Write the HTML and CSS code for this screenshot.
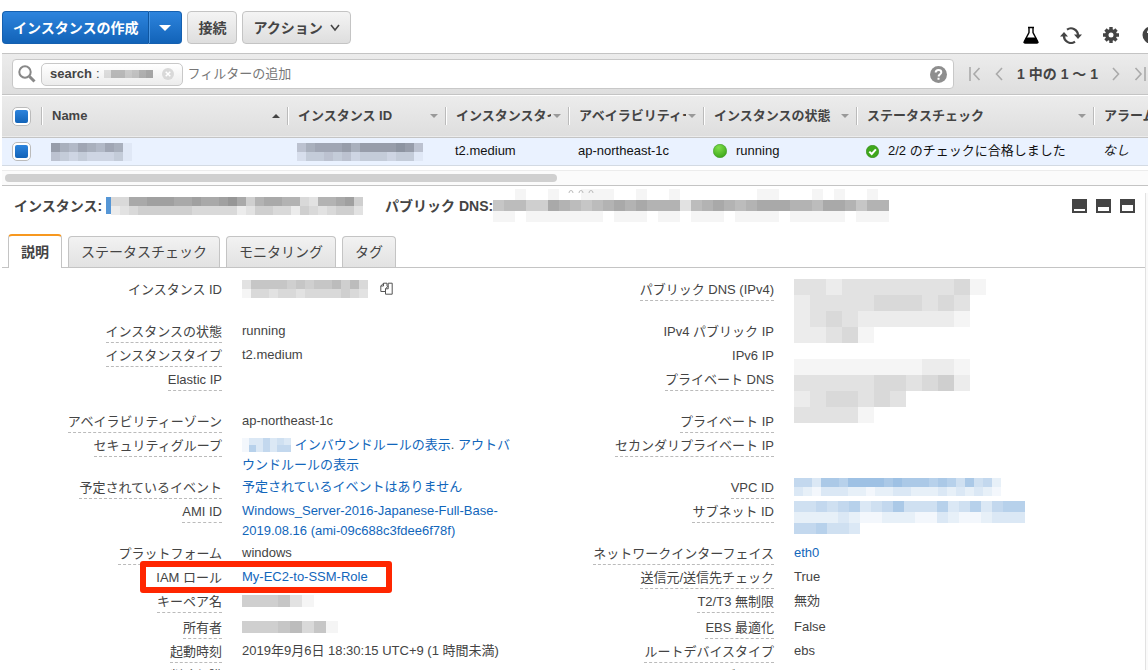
FILE: index.html
```html
<!DOCTYPE html>
<html lang="ja">
<head>
<meta charset="utf-8">
<meta name="viewport" content="width=device-width, initial-scale=1">
<title>インスタンス</title>
<link rel="stylesheet" href="styles.css">
<script src="mosaic.js" defer></script>
</head>
<body>
<header class="toolbar">
  <div class="split">
    <button type="button" class="btn btn-primary split-main">インスタンスの作成</button><button type="button" class="btn btn-primary split-toggle" aria-label="その他の作成オプション"><svg width="12" height="6" viewBox="0 0 12 6"><path d="M0 0h12L6 6z" fill="#fff"/></svg></button>
  </div>
  <button type="button" class="btn">接続</button>
  <button type="button" class="btn">アクション<svg class="chev" width="10" height="8" viewBox="0 0 10 8"><path d="M1 1l4 5 4-5" fill="none" stroke="#444" stroke-width="1.6"/></svg></button>
  <div class="tools">
    <button type="button" class="tool" aria-label="試験機能"><svg width="22" height="18" viewBox="0 0 22 18"><path d="M8 1.500h6M9 1.500v5L4.300 15.500q-.6 1.500 .9 1.500h11.600q1.500 0 .9-1.500L13 6.500v-5" fill="none" stroke="#000" stroke-width="1.400"/><path d="M6 11.500h10l2.500 5.500h-15z" fill="#000"/></svg></button>
    <button type="button" class="tool" aria-label="更新"><svg width="22" height="18" viewBox="0 0 22 18"><path d="M7 3.600A7 7 0 0 1 18 9.500M15 15.600A7 7 0 0 1 4 9" fill="none" stroke="#444" stroke-width="2.200"/><path d="M14 8.500h8l-4 4.500zM0 10.500h8L4 6z" fill="#444"/></svg></button>
    <button type="button" class="tool" aria-label="設定"><svg width="22" height="18" viewBox="0 0 22 18"><g transform="translate(11 9)" fill="none" stroke="#444"><circle r="4.200" stroke-width="3.400"/><path stroke-width="3.400" d="M0-8v3M0 8v-3M-8 0h3M8 0h-3M-5.500-5.500l2 2M5.500 5.500l-2-2M5.500-5.500l-2 2M-5.500 5.500l2-2"/></g></svg></button>
    <button type="button" class="tool" aria-label="ヘルプ"><svg width="22" height="18" viewBox="0 0 22 18"><circle cx="11" cy="9" r="8.500" fill="#444"/><path d="M8 7q0-3 3-3t3 2.700q0 1.300-1.500 2.200T11 11.500M11 12.500v2" fill="none" stroke="#fff" stroke-width="2"/></svg></button>
  </div>
</header>

<div class="filterbar">
  <div class="searchbox">
    <svg width="18" height="18" viewBox="0 0 18 18"><circle cx="7" cy="7" r="5.700" fill="none" stroke="#888" stroke-width="2"/><path d="M11.500 11.500l5 5" stroke="#888" stroke-width="3"/></svg>
    <span class="chip"><b>search</b> : <span class="mosaic" data-w="7" data-h="8" data-rows="3775689"></span><button type="button" class="chip-x" aria-label="削除"><svg width="12" height="12" viewBox="0 0 12 12"><circle cx="6" cy="6" r="6" fill="#d9d9d9"/><path d="M3.700 3.700l4.600 4.600M8.300 3.700L3.700 8.300" stroke="#fff" stroke-width="1.500"/></svg></button></span>
    <input type="text" class="search-input" placeholder="フィルターの追加" aria-label="フィルターの追加">
    <button type="button" class="plain" aria-label="検索のヘルプ"><svg width="17" height="17" viewBox="0 0 17 17"><circle cx="8.500" cy="8.500" r="8.500" fill="#8e8e8e"/><path d="M5.700 6.600q0-2.600 2.800-2.600t2.800 2.300q0 1.200-1.300 2T8.500 10.500M8.500 11.700v2" fill="none" stroke="#fff" stroke-width="2"/></svg></button>
  </div>
  <nav class="pager" aria-label="ページ">
    <button type="button" class="plain" aria-label="最初"><svg width="12" height="14" viewBox="0 0 12 14"><path d="M1 0v14M10.500 1L5 7l5.500 6" fill="none" stroke="#aaa" stroke-width="1.600"/></svg></button>
    <button type="button" class="plain" aria-label="前"><svg width="8" height="14" viewBox="0 0 8 14"><path d="M7 1L1.500 7 7 13" fill="none" stroke="#aaa" stroke-width="1.600"/></svg></button>
    <span>1 中の 1 〜 1</span>
    <button type="button" class="plain" aria-label="次"><svg width="8" height="14" viewBox="0 0 8 14"><path d="M1 1l5.500 6L1 13" fill="none" stroke="#aaa" stroke-width="1.600"/></svg></button>
    <button type="button" class="plain" aria-label="最後"><svg width="12" height="14" viewBox="0 0 12 14"><path d="M11 0v14M1.500 1L7 7l-5.500 6" fill="none" stroke="#aaa" stroke-width="1.600"/></svg></button>
  </nav>
</div>

<div class="table-wrap">
<table class="instances">
  <colgroup><col class="c-check"><col class="c-name"><col class="c-id"><col class="c-type"><col class="c-zone"><col class="c-state"><col class="c-status"><col class="c-alarm"></colgroup>
  <thead><tr>
    <th class="check"><input type="checkbox" class="box" checked aria-label="すべて選択"></th>
    <th><div class="head"><span>Name</span><i class="up"></i></div></th>
    <th><div class="head"><span>インスタンス ID</span><i class="down"></i></div></th>
    <th><div class="head"><span>インスタンスタイプ</span><i class="down"></i></div></th>
    <th><div class="head"><span>アベイラビリティーゾーン</span><i class="down"></i></div></th>
    <th><div class="head"><span>インスタンスの状態</span><i class="down"></i></div></th>
    <th><div class="head"><span>ステータスチェック</span><i class="down"></i></div></th>
    <th><div class="head"><span>アラームのステータス</span></div></th>
  </tr></thead>
  <tbody><tr>
    <td class="check"><input type="checkbox" class="box" checked aria-label="インスタンスを選択"></td>
    <td><span class="mosaic slate" data-w="9" data-h="9" data-rows="976876871,543433341"></span></td>
    <td><span class="mosaic slate" data-w="9" data-h="9" data-rows="57888979999a95,24454534443441"></span></td>
    <td>t2.medium</td>
    <td>ap-northeast-1c</td>
    <td><span class="status"><svg width="14" height="14" viewBox="0 0 14 14"><defs><radialGradient id="ball" cx=".4" cy=".25" r=".8"><stop offset="0" stop-color="#7fdf4a"/><stop offset="1" stop-color="#3aa51a"/></radialGradient></defs><circle cx="7" cy="7" r="6.700" fill="url(#ball)" stroke="#3c9a20" stroke-width=".6"/></svg>running</span></td>
    <td><span class="status"><svg width="13" height="13" viewBox="0 0 13 13"><circle cx="6.500" cy="6.500" r="6.200" fill="#3fa81c" stroke="#2f8412" stroke-width=".6"/><path d="M3.300 6.600l2.400 2.400 4.200-4.600" fill="none" stroke="#fff" stroke-width="2"/></svg>2/2 のチェックに合格しました</span></td>
    <td><em>なし</em></td>
  </tr></tbody>
</table>
<div class="scroll"><div class="thumb"></div></div>
</div>

<section class="details">
  <svg class="grip" width="26" height="3" viewBox="0 0 26 3"><g fill="none" stroke="#bbb"><path d="M1 3q0-2.500 2-2.500T5 3M11 3q0-2.500 2-2.500T15 3M21 3q0-2.500 2-2.500T25 3"/></g></svg>
  <div class="pane">
    <div class="title">
      <span class="title-part">インスタンス:<i class="bar"></i><span class="mosaic" data-w="9" data-h="9" data-rows="4499aaa99a99ab958998843889a5,2345555554444423554425434553"></span></span>
      <span class="title-part">パブリック DNS:<span class="mosaic" data-w="11" data-h="11" data-rows="001001001110010010000000110001010010,677559876789898883789878999887998688,110111111101110110111011110111110111"></span></span>
      <span class="layouts">
        <button type="button" class="plain" aria-label="下部に最小化"><svg width="15" height="14"><path d="M0 0h15v14H0z" fill="#444"/><path d="M2 10h11v2H2z" fill="#fff"/></svg></button>
        <button type="button" class="plain" aria-label="半分表示"><svg width="15" height="14"><path d="M0 0h15v14H0z" fill="#444"/><path d="M2 8h11v4H2z" fill="#fff"/></svg></button>
        <button type="button" class="plain" aria-label="全体表示"><svg width="15" height="14"><path d="M0 0h15v14H0z" fill="#444"/><path d="M2 6h11v6H2z" fill="#fff"/></svg></button>
      </span>
    </div>
    <div class="tabs" role="tablist">
      <button type="button" role="tab" class="tab active" aria-selected="true">説明</button>
      <button type="button" role="tab" class="tab">ステータスチェック</button>
      <button type="button" role="tab" class="tab">モニタリング</button>
      <button type="button" role="tab" class="tab">タグ</button>
    </div>
    <div class="props">
      <div class="label tall"><span class="bare">インスタンス ID</span></div>
      <div class="value copy"><span class="mosaic" data-w="9" data-h="9" data-rows="36666565667574,14434434444543"></span><button type="button" class="plain" aria-label="コピー"><svg width="13" height="13" viewBox="0 0 13 13"><path d="M5 9.500H.8V4L3.500 1.200H7v3M3.500 1.200V4H.8M5.500 12.200V6.800L8.200 4V1.200h4v11zM8.200 4v2.800H5.500" fill="none" stroke="#555"/></svg></button></div>
      <div class="label"><span>パブリック DNS (IPv4)</span></div>
      <div class="value masked"><span class="mosaic" data-w="16" data-h="16" data-rows="332333333341,23333444343,23432222221,22341,0,11111111221,33333443452,2344343,33331"></span></div>

      <div class="label"><span>インスタンスの状態</span></div><div class="value">running</div>
      <div class="label"><span class="bare">IPv4 パブリック IP</span></div>

      <div class="label"><span>インスタンスタイプ</span></div><div class="value">t2.medium</div>
      <div class="label"><span class="bare">IPv6 IP</span></div>

      <div class="label tall"><span>Elastic IP</span></div><div class="value"></div>
      <div class="label"><span>プライベート DNS</span></div>

      <div class="label"><span>アベイラビリティーゾーン</span></div><div class="value">ap-northeast-1c</div>
      <div class="label"><span>プライベート IP</span></div>

      <div class="label tall"><span>セキュリティグループ</span></div>
      <div class="value"><span class="mosaic blue" data-w="7" data-h="7" data-rows="1335343,1635355"></span> <a href="#">インバウンドルールの表示</a>. <a href="#">アウトバウンドルールの表示</a></div>
      <div class="label"><span>セカンダリプライベート IP</span></div><div class="value"></div>

      <div class="label"><span>予定されているイベント</span></div><div class="value"><a href="#">予定されているイベントはありません</a></div>
      <div class="label"><span>VPC ID</span></div>
      <div class="value"><span class="mosaic blue" data-w="9" data-h="9" data-rows="55377688887877767647452,32133322122332223232321"></span></div>

      <div class="label tall"><span>AMI ID</span></div><div class="value"><a href="#">Windows_Server-2016-Japanese-Full-Base-2019.08.16 (ami-09c688c3fdee6f78f)</a></div>
      <div class="label"><span>サブネット ID</span></div>
      <div class="value"><span class="mosaic blue" data-w="11" data-h="11" data-rows="445456345744463463566,222232112221132112333,556443"></span></div>

      <div class="label"><span>プラットフォーム</span></div><div class="value">windows</div>
      <div class="label"><span>ネットワークインターフェイス</span></div><div class="value"><a href="#">eth0</a></div>

      <div class="label marked"><span class="bare">IAM ロール</span></div><div class="value"><a href="#">My-EC2-to-SSM-Role</a></div>
      <div class="label"><span>送信元/送信先チェック</span></div><div class="value">True</div>

      <div class="label mid"><span>キーペア名</span></div><div class="value"><span class="mosaic" data-w="12" data-h="12" data-rows="555631"></span></div>
      <div class="label"><span>T2/T3 無制限</span></div><div class="value">無効</div>

      <div class="label"><span>所有者</span></div><div class="value"><span class="mosaic" data-w="12" data-h="12" data-rows="55567461"></span></div>
      <div class="label"><span>EBS 最適化</span></div><div class="value">False</div>

      <div class="label"><span>起動時刻</span></div><div class="value">2019年9月6日 18:30:15 UTC+9 (1 時間未満)</div>
      <div class="label"><span>ルートデバイスタイプ</span></div><div class="value">ebs</div>

      <div class="label"><span>削除保護</span></div><div class="value">False</div>
      <div class="label"><span>ルートデバイス</span></div><div class="value"><a href="#">/dev/sda1</a></div>
    </div>
  </div>
  <div class="edge"></div>
</section>
</body>
</html>
```
FILE: styles.css
```css
*, *::after { box-sizing: border-box; }
html, body { height: 100%; }
body {
  margin: 0;
  padding-left: 2px;
  display: flex;
  flex-direction: column;
  overflow: hidden;
  background: #fff;
  color: #444;
  font: 13px/20px "Liberation Sans", "Noto Sans CJK JP", sans-serif;
}
button, input { font: inherit; color: inherit; }
svg { display: block; }
a { color: #1166bb; text-decoration: none; }
.plain, .tool, .chip-x { border: 0; padding: 0; background: none; flex: none; }

.toolbar { display: flex; gap: 5px; padding: 11px 0 9px; flex: none; }
.btn {
  display: flex;
  align-items: center;
  height: 33px;
  padding: 0 10px;
  border: 1px solid #c4c4c4;
  border-radius: 4px;
  background: linear-gradient(#f4f4f4, #dedede);
  font-size: 14px;
  font-weight: bold;
  white-space: nowrap;
}
.chev { margin-left: 7px; }
.split { display: flex; }
.btn-primary {
  color: #fff;
  border-color: #1560b0;
  background: linear-gradient(#2d84dd, #1263b8);
}
.split-main { border-radius: 4px 0 0 4px; border-right: 0; }
.split-toggle { border-radius: 0 4px 4px 0; border-left-color: #0f56a0; box-shadow: inset 1px 0 #4a97e4; }
.tools { display: flex; gap: 18px; margin: 0 -14px 0 auto; align-items: flex-end; }

.filterbar {
  display: flex;
  align-items: center;
  flex: none;
  padding: 5px 2px 5px 10px;
  border-top: 1px solid #c4c4c4;
  border-bottom: 1px solid #c4c4c4;
  background: linear-gradient(#ececec, #dedede);
}
.searchbox {
  display: flex;
  align-items: center;
  flex: 1;
  height: 30px;
  padding: 0 6px 0 5px;
  border: 1px solid #c8c8c8;
  border-radius: 4px;
  background: #fff;
}
.chip {
  display: flex;
  align-items: center;
  gap: 4px;
  height: 23px;
  margin-left: 5px;
  padding: 0 8px;
  border: 1px solid #c8c8c8;
  border-radius: 5px;
  background: linear-gradient(#fff, #ececec);
}
.chip-x { margin-left: 5px; }
.search-input { flex: 1; min-width: 0; height: 20px; margin-left: 5px; padding: 0; border: 0; outline: 0; background: none; }
.search-input::placeholder { color: #777; opacity: 1; }
.pager { display: flex; align-items: center; gap: 14px; margin-left: 15px; font-weight: bold; font-size: 14px; white-space: nowrap; }

.table-wrap { flex: none; overflow: hidden; border-top: 1px solid #fff; }
.instances { width: 1291px; table-layout: fixed; border-collapse: collapse; }
.c-check { width: 39px; }
.c-name { width: 246px; }
.c-id { width: 158px; }
.c-type { width: 123px; }
.c-zone { width: 135px; }
.c-state { width: 153px; }
.c-status { width: 237px; }
.c-alarm { width: 200px; }
.instances thead tr { height: 41px; background: linear-gradient(#ececec, #dedede); border-bottom: 1px solid #c4c4c4; }
.instances th { padding: 0; text-align: left; }
.head {
  display: flex;
  align-items: center;
  gap: 2px;
  height: 18px;
  padding: 0 7px 0 10px;
  border-left: 1px solid #bbb;
  box-shadow: inset 1px 0 #fff;
}
.head span { flex: 1; overflow: hidden; white-space: nowrap; }
.up, .down { flex: none; border: 4px solid transparent; }
.up { border-top: 0; border-bottom-color: #444; }
.down { border-bottom: 0; border-top-color: #999; }
.instances tbody tr { height: 28px; background: #eaf2ff; color: #111; border-bottom: 1px solid #d3dae3; }
.instances td { padding: 0 0 0 10px; white-space: nowrap; }
.instances .check { padding: 0 0 0 10px; }
.box {
  appearance: none;
  display: block;
  width: 19px;
  height: 19px;
  margin: 0;
  border: 1px solid #bbb;
  border-radius: 5px;
  background: linear-gradient(#2d84dd, #1263b8) content-box, #fff;
  padding: 2px;
}
.status { display: flex; align-items: center; gap: 9px; }
.scroll { margin-top: 4px; padding: 3px; border-top: 1px solid #ececec; border-bottom: 1px solid #c4c4c4; background: #fbfbfb; }
.thumb { width: 48.4%; height: 8px; border-radius: 4px; background: #d0d0d0; }

.details { position: relative; flex: 1; min-height: 0; display: flex; }
.grip { position: absolute; top: 4px; left: calc(50% - 7px); }
.pane { flex: 1; min-width: 0; overflow: hidden; }
.edge { flex: none; width: 3px; margin-top: 7px; border-left: 1px solid #e2e2e2; background: #fafafa; }
.title { display: flex; align-items: center; gap: 22px; height: 48px; padding: 0 10px 8px 12px; font-size: 14px; font-weight: bold; }
.title-part { display: flex; align-items: center; white-space: nowrap; }
.bar { width: 5px; height: 17px; margin-left: 4px; background: #5596d6; }
.layouts { display: flex; gap: 9px; margin-left: auto; }

.tabs { display: flex; align-items: flex-end; gap: 6px; padding-left: 6px; border-bottom: 1px solid #c4c4c4; }
.tab {
  height: 31px;
  padding: 0 12px;
  border: 1px solid #c4c4c4;
  border-bottom: 0;
  border-radius: 4px 4px 0 0;
  background: linear-gradient(#f2f2f2, #e2e2e2);
  font-size: 14px;
}
.tab.active { position: relative; height: 34px; margin-bottom: -1px; border-top: 2px solid #f7981f; background: #fff; font-weight: bold; }

.props {
  display: grid;
  grid-template-columns: 220px minmax(0, 1fr) 220px minmax(0, 1fr);
  column-gap: 20px;
  padding: 11px 59px 0 0;
}
.label { min-height: 24px; text-align: right; white-space: nowrap; }
.label span { display: inline-block; padding-top: 1px; border-bottom: 1px dashed #bbb; }
.label .bare { border-color: transparent; }
.label.tall { min-height: 42px; }
.label.mid { min-height: 26px; }
.value { padding-right: 20px; }
.masked { grid-row: span 5; height: 0; padding: 0; }
.copy { display: flex; align-items: center; gap: 12px; height: 20px; padding: 0; }
.marked { position: relative; }
.marked::after {
  content: "";
  position: absolute;
  top: -6px;
  left: calc(100% - 82px);
  width: 252px;
  height: 32px;
  border: 6px solid #ff2600;
  border-radius: 3px;
  pointer-events: none;
}

.mosaic { display: inline-block; vertical-align: middle; color: #707070; }
.slate { color: #5f6472; }
.blue { color: #4a8bcc; }
```
FILE: mosaic.js
```js
// Draws masked values as a grid of cells; each hex digit is a cell's density.
document.querySelectorAll(".mosaic").forEach(function (el) {
  var w = Number(el.dataset.w);
  var h = Number(el.dataset.h);
  var rows = el.dataset.rows.split(",");
  var cols = Math.max.apply(null, rows.map(function (r) { return r.length; }));
  var cells = "";
  rows.forEach(function (row, y) {
    row.split("").forEach(function (digit, x) {
      cells += '<rect x="' + x * w + '" y="' + y * h + '" width="' + w + '" height="' + h +
        '" fill="currentColor" fill-opacity="' + parseInt(digit, 16) / 15 + '"/>';
    });
  });
  el.innerHTML = '<svg width="' + cols * w + '" height="' + rows.length * h +
    '" shape-rendering="crispEdges" aria-hidden="true">' + cells + "</svg>";
});
```
